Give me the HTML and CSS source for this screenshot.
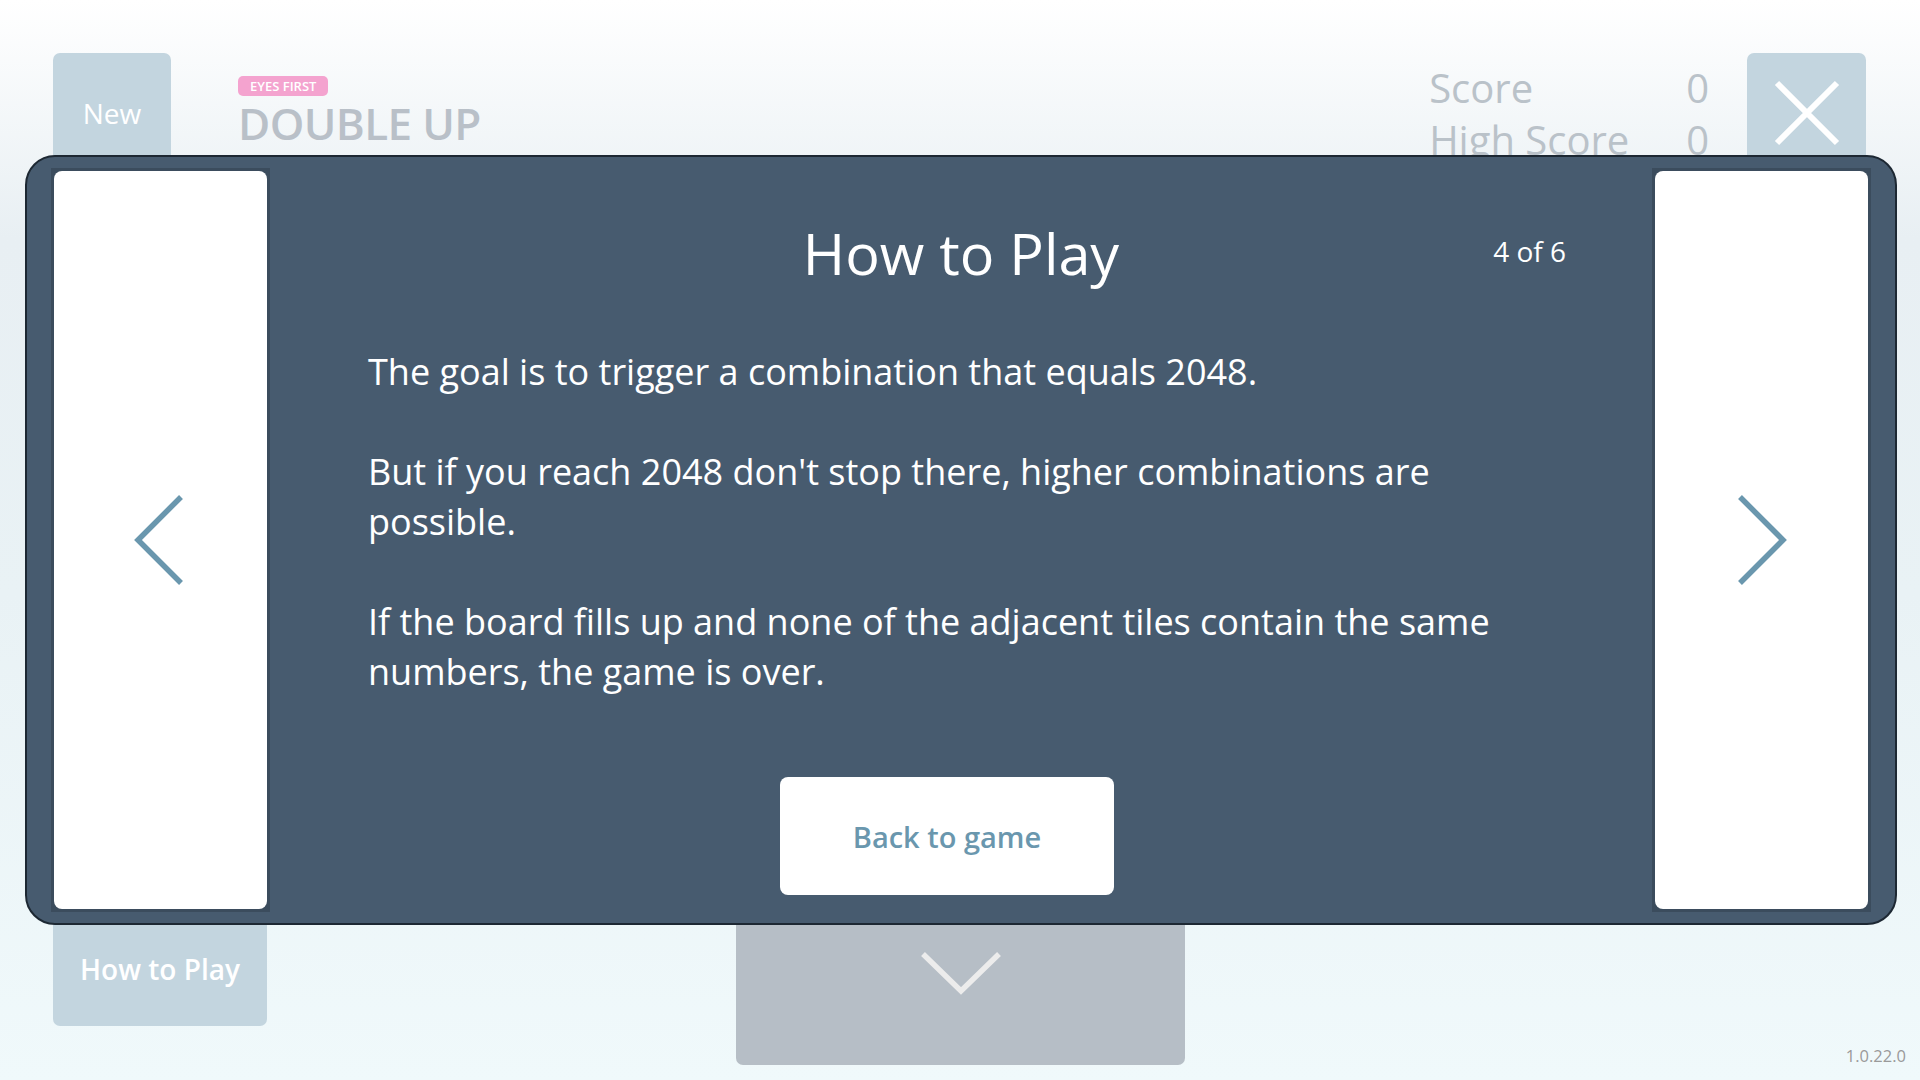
FILE: index.html
```html
<!DOCTYPE html>
<html>
<head>
<meta charset="utf-8">
<link rel="stylesheet" href="styles.css">
</head>
<body>
<div class="page">
  <header class="topbar">
    <div class="tile new-btn"><span>New</span></div>
    <div class="brand">
      <span class="badge">EYES FIRST</span>
      <div class="game-name">DOUBLE UP</div>
    </div>
    <div class="scores">
      <span class="s-label">Score</span><span class="s-val">0</span>
      <span class="s-label">High Score</span><span class="s-val">0</span>
    </div>
    <div class="tile close-btn">
      <svg width="66" height="66" viewBox="0 0 66 66"><path d="M3 3 L63 63 M63 3 L3 63" stroke="#ffffff" stroke-width="6" fill="none"/></svg>
    </div>
  </header>

  <footer class="bottombar">
    <div class="tile howto-btn"><span>How to Play</span></div>
    <div class="drawer">
      <svg width="82" height="44" viewBox="0 0 82 44"><path d="M3 3 L41 40 L79 3" stroke="#ececec" stroke-width="5.5" fill="none"/></svg>
    </div>
    <div class="version">1.0.22.0</div>
  </footer>

  <div class="dialog">
    <div class="side">
      <div class="side-inner prev">
        <svg width="52" height="90" viewBox="0 0 52 90"><path d="M48 2 L5 45 L48 88" stroke="#6a97ae" stroke-width="5.5" fill="none"/></svg>
      </div>
    </div>
    <div class="content">
      <div class="dlg-head">
        <div></div>
        <h1 class="dlg-title">How to Play</h1>
        <div class="counter">4 of 6</div>
      </div>
      <div class="body">
        <p>The goal is to trigger a combination that equals 2048.</p>
        <p>But if you reach 2048 don't stop there, higher combinations are possible.</p>
        <p>If the board fills up and none of the adjacent tiles contain the same numbers, the game is over.</p>
      </div>
      <div class="actions">
        <button class="back-btn">Back to game</button>
      </div>
    </div>
    <div class="side">
      <div class="side-inner">
        <svg width="52" height="90" viewBox="0 0 52 90"><path d="M4 2 L47 45 L4 88" stroke="#6a97ae" stroke-width="5.5" fill="none"/></svg>
      </div>
    </div>
  </div>
</div>
</body>
</html>
```
FILE: styles.css
```css
* { box-sizing: border-box; }
html, body { margin: 0; padding: 0; }
body {
  font-family: "Open Sans", "Noto Sans", sans-serif;
  width: 1920px;
  height: 1080px;
  overflow: hidden;
}
.page {
  position: relative;
  width: 1920px;
  height: 1080px;
  background: linear-gradient(180deg, #ffffff 0%, #e8eff3 22%, #e9f2f5 55%, #f0f9fb 100%);
  display: flex;
  flex-direction: column;
  justify-content: space-between;
}
.tile {
  background: #c3d5df;
  border-radius: 7px;
  color: #ffffff;
}
.topbar {
  display: flex;
  align-items: flex-start;
  padding: 53px 54px 0 53px;
}
.new-btn {
  width: 118px;
  height: 130px;
  display: flex;
  justify-content: center;
  padding-top: 41px;
  font-size: 28px;
  line-height: 38px;
}
.brand {
  margin-left: 67px;
  padding-top: 23px;
  display: flex;
  flex-direction: column;
  align-items: flex-start;
}
.badge {
  background: #f4a3cf;
  color: #ffffff;
  font-size: 13px;
  font-weight: 600;
  line-height: 20px;
  height: 20px;
  padding: 0 12px;
  border-radius: 5px;
}
.game-name {
  font-size: 44px;
  font-weight: 600;
  color: #b9c0c8;
  line-height: 56px;
  margin-top: -1px;
  letter-spacing: -0.6px;
}
.scores {
  margin-left: auto;
  margin-top: 9px;
  display: grid;
  grid-template-columns: 257px auto;
  font-size: 40px;
  line-height: 52px;
  color: #bac2c9;
}
.close-btn {
  margin-left: 38px;
  width: 119px;
  height: 130px;
  display: flex;
  justify-content: center;
  padding-top: 27px;
}
.bottombar {
  display: flex;
  align-items: flex-end;
  padding: 0 14px 15px 53px;
}
.howto-btn {
  width: 214px;
  height: 130px;
  margin-bottom: 39px;
  display: flex;
  justify-content: center;
  align-items: flex-end;
  padding-bottom: 38px;
  font-size: 28px;
  font-weight: 600;
  line-height: 38px;
}
.drawer {
  margin-left: 469px;
  width: 449px;
  height: 160px;
  background: #b6bec6;
  border-radius: 0 0 7px 7px;
  display: flex;
  justify-content: center;
  padding-top: 46px;
}
.version {
  margin-left: auto;
  font-size: 16.5px;
  color: #9a9a9a;
  line-height: 18px;
}
.dialog {
  position: absolute;
  left: 25px;
  top: 155px;
  width: 1872px;
  height: 770px;
  background: #475b6f;
  border: 2px solid #1d2833;
  border-radius: 30px;
  padding: 11px 24px;
  display: flex;
}
.side {
  width: 219px;
  background: #3b4c5d;
  padding: 3px;
  flex: none;
}
.side-inner {
  height: 100%;
  background: #ffffff;
  border-radius: 8px;
  display: flex;
  align-items: center;
  justify-content: center;
}
.side-inner.prev { padding-right: 4px; }
.content {
  flex: 1;
  display: flex;
  flex-direction: column;
  color: #ffffff;
}
.dlg-head {
  display: grid;
  grid-template-columns: 1fr auto 1fr;
  padding: 52px 86px 0 86px;
}
.dlg-title {
  margin: 0;
  font-size: 57.5px;
  font-weight: 400;
  line-height: 67px;
}
.counter {
  justify-self: end;
  margin-top: 12px;
  font-size: 28px;
  line-height: 38px;
}
.body {
  padding: 60px 132px 0 98px;
  font-size: 36px;
  line-height: 50px;
}
.body p { margin: 0 0 50px 0; }
.body p:last-child { margin-bottom: 0; }
.actions {
  display: flex;
  justify-content: center;
  padding-right: 28px;
  margin-top: 80px;
}
.back-btn {
  width: 334px;
  height: 118px;
  background: #ffffff;
  border: none;
  border-radius: 8px;
  font-family: "Open Sans", "Noto Sans", sans-serif;
  font-size: 29px;
  font-weight: 600;
  color: #6a97ae;
}
```
